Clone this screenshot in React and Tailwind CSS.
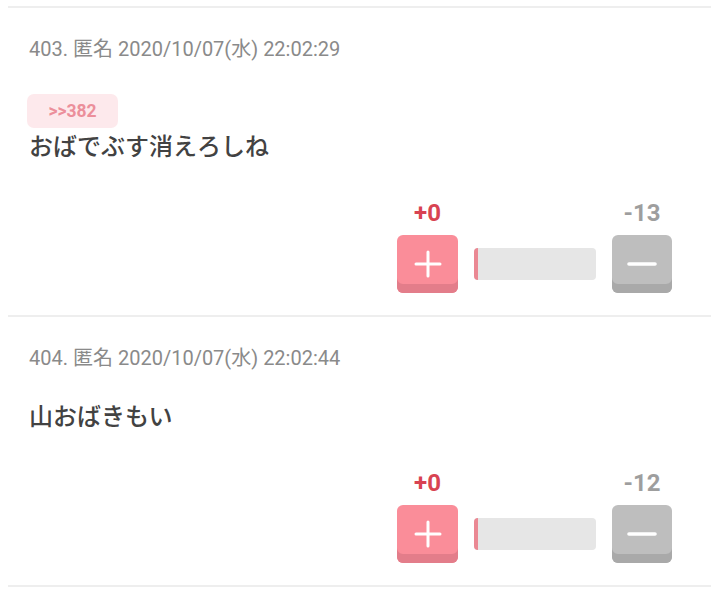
const posts = [
  {
    no: 403,
    date: "2020/10/07(水) 22:02:29",
    anchor: ">>382",
    body: "おばでぶす消えろしね",
    plus: 0,
    minus: -13,
  },
  {
    no: 404,
    date: "2020/10/07(水) 22:02:44",
    anchor: null,
    body: "山おばきもい",
    plus: 0,
    minus: -12,
  },
];

function PlusIcon() {
  return (
    <svg width="28" height="28" viewBox="0 0 28 28" fill="none">
      <path d="M14 2v24M2 14h24" stroke="white" strokeWidth="3" strokeLinecap="round" />
    </svg>
  );
}

function MinusIcon() {
  return (
    <svg width="30" height="8" viewBox="0 0 30 8" fill="none">
      <path d="M2 4h26" stroke="white" strokeWidth="3.6" strokeLinecap="round" />
    </svg>
  );
}

function Post({ post }) {
  return (
    <div>
      <div className="mx-[8px] h-[2px] bg-[#eeeeee]"></div>
      <div className="pl-[29px] pr-[47px] pt-[31px] pb-[22px]">
        <p className="text-[20px] leading-[20px] text-[#8a8a8a]">
          {post.no}. 匿名 {post.date}
        </p>

        {post.anchor ? (
          <div className="-ml-[2px] mt-[35px] flex h-[34px] w-[91px] items-center justify-center rounded-[7px] bg-[#fde9ec]">
            <span className="text-[17.5px] font-bold text-[#ec8f9b]">{post.anchor}</span>
          </div>
        ) : null}

        <p
          className={
            "text-[24px] leading-[30px] font-medium text-[#424242] " +
            (post.anchor ? "mt-[4px]" : "mt-[34px]")
          }
        >
          {post.body}
        </p>

        <div className="mt-[39px] flex justify-end">
          <div className="grid grid-cols-[61px_122px_60px] gap-x-[16px]">
            <div className="text-center text-[24px] leading-[24px] font-bold text-[#d84352]">
              +{post.plus}
            </div>
            <div></div>
            <div className="text-center text-[24px] leading-[24px] font-bold text-[#9e9e9e]">
              {post.minus}
            </div>

            <button className="mt-[10px] flex h-[58px] items-center justify-center rounded-[6px] bg-[#fa8d99] shadow-[inset_0_-9px_0_#e37d8a]">
              <PlusIcon />
            </button>
            <div className="mt-[10px] flex items-center">
              <div className="flex h-[32px] w-full overflow-hidden rounded-[4px] bg-[#e6e6e6]">
                <div className="w-[4px] bg-[#ea8893]"></div>
              </div>
            </div>
            <button className="mt-[10px] flex h-[58px] items-center justify-center rounded-[6px] bg-[#bebebe] shadow-[inset_0_-9px_0_#a9a9a9]">
              <MinusIcon />
            </button>
          </div>
        </div>
      </div>
    </div>
  );
}

export default function App() {
  return (
    <div
      className="min-h-[603px] w-[719px] bg-white pt-[6px]"
      style={{ fontFamily: 'Roboto, "Noto Sans CJK JP", sans-serif' }}
    >
      {posts.map((p) => (
        <Post key={p.no} post={p} />
      ))}
      <div className="mx-[8px] h-[2px] bg-[#eeeeee]"></div>
    </div>
  );
}
